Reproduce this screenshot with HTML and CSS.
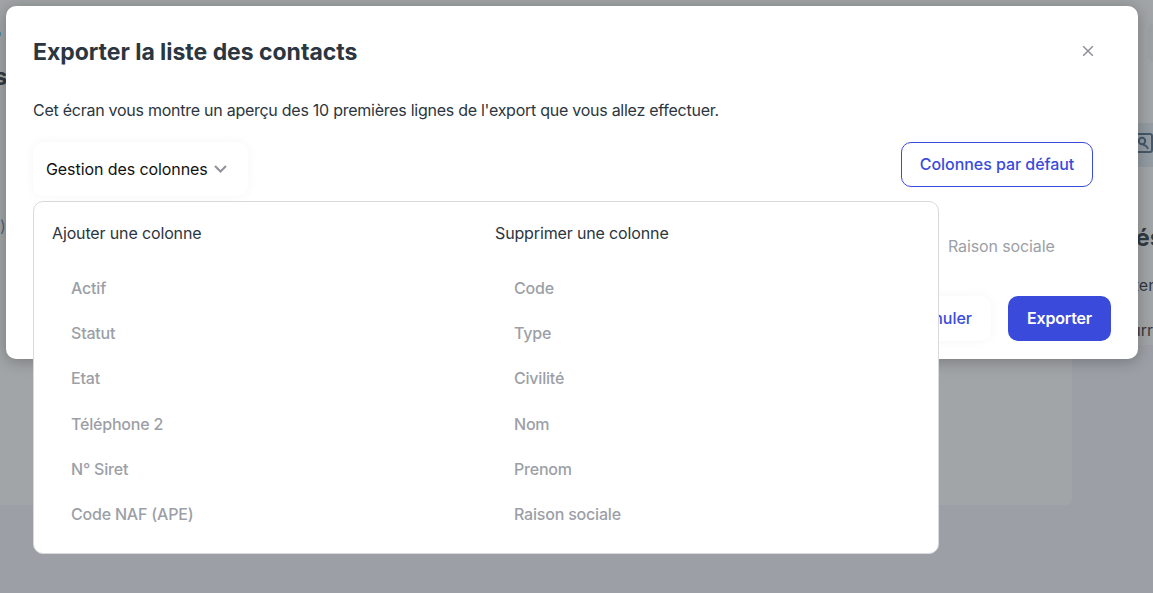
FILE: index.html
```html
<!DOCTYPE html>
<html lang="fr">
<head>
<meta charset="utf-8">
<title>Exporter la liste des contacts</title>
<link rel="stylesheet" href="styles.css">
</head>
<body>
<div class="page">
  <main class="main">
    <span class="crumb">Info</span>
    <span class="page-title">Contacts</span>
    <span class="cell">(actif)</span>
  </main>
  <aside class="aside">
    <div class="aside-card"></div>
    <div class="aside-tool">
      <svg class="search-ico" width="22" height="22" viewBox="0 0 22 22" fill="none" stroke="#4d6f8c" stroke-width="2"><rect x="2" y="2" width="18" height="18" rx="2"/><circle cx="10" cy="9" r="3.2"/><path d="M16 17c-1-3-3-4-5-4"/></svg>
    </div>
    <div class="side-text">
      <strong>Résumé</strong>
      <span class="l1">Contenu</span>
      <span class="l2">Courrier</span>
    </div>
  </aside>
</div>
<div class="overlay"></div>
<div class="modal">
  <header class="modal-head">
    <h1>Exporter la liste des contacts</h1>
    <svg class="close" width="12" height="12" viewBox="0 0 12 12" fill="none" stroke="#8c8a94" stroke-width="1.4"><path d="M1.2 1.2l9.6 9.6M10.8 1.2l-9.6 9.6"/></svg>
  </header>
  <p class="intro">Cet écran vous montre un aperçu des 10 premières lignes de l'export que vous allez effectuer.</p>
  <div class="tools">
    <button class="manage">Gestion des colonnes
      <svg width="13" height="8" viewBox="0 0 13 8" fill="none" stroke="#8f9298" stroke-width="2"><path d="M1 1l5.5 5.5L12 1"/></svg>
    </button>
    <button class="defaults">Colonnes par défaut</button>
  </div>
  <div class="preview"><span>Raison sociale</span></div>
  <footer class="modal-foot">
    <button class="cancel">Annuler</button>
    <button class="export">Exporter</button>
  </footer>
  <div class="dropdown">
    <section>
      <h2>Ajouter une colonne</h2>
      <ul>
        <li>Actif</li><li>Statut</li><li>Etat</li><li>Téléphone 2</li><li>N° Siret</li><li>Code NAF (APE)</li>
      </ul>
    </section>
    <section>
      <h2>Supprimer une colonne</h2>
      <ul>
        <li>Code</li><li>Type</li><li>Civilité</li><li>Nom</li><li>Prenom</li><li>Raison sociale</li>
      </ul>
    </section>
  </div>
</div>
</body>
</html>
```
FILE: styles.css
```css
* { box-sizing: border-box; }
html, body { margin: 0; height: 100%; overflow: hidden; }
body { font-family: Inter, "Noto Sans", sans-serif; background: #f4f6fd; color: #2b3640; position: relative; }
.page { height: 593px; overflow: hidden; display: flex; align-items: flex-start; }
.main { width: 1072px; height: 505px; background: #fff; border-radius: 0 0 6px 0; padding-top: 24px; display: flex; flex-direction: column; align-items: flex-start; }
.crumb { font-size: 14px; line-height: 18px; color: #1b7f9a; margin-left: -24px; }
.page-title { font-size: 24px; font-weight: 700; line-height: 30px; margin: 20px 0 0 -99px; }
.cell { font-size: 16px; line-height: 20px; color: #5d86b0; margin: 124px 0 0 -39px; }
.aside { flex: 1; min-width: 0; height: 345px; background: #fff; position: relative; }
.aside-card { position: absolute; left: 76px; top: 24px; width: 60px; height: 38px; background: #f7f7f7; border-radius: 6px 0 0 6px; }
.aside-tool { position: absolute; left: 50px; right: 0; top: 123px; height: 44px; background: #e2eef5; display: flex; justify-content: flex-end; align-items: center; }
.search-ico { margin-right: -1px; margin-top: -4px; }
.side-text { position: absolute; left: 48px; top: 223px; display: flex; flex-direction: column; align-items: flex-start; white-space: nowrap; }
.side-text strong { font-size: 24px; line-height: 30px; }
.side-text span { font-size: 16px; line-height: 20px; }
.side-text .l1 { margin: 22px 0 0 -17px; }
.side-text .l2 { margin: 25px 0 0 -10px; }
.overlay { position: absolute; inset: 0; background: rgba(57, 64, 68, .47); }
.modal {
  position: absolute; left: 6px; top: 6px; width: 1132px; height: 353px;
  background: #fff; border-radius: 10px; padding: 28px 27px 0 27px;
  box-shadow: 0 2px 16px rgba(0,0,0,.28);
  display: flex; flex-direction: column;
}
.modal-head { display: flex; justify-content: space-between; align-items: center; height: 36px; padding-right: 17px; }
.close { margin-top: -2px; }
h1 { margin: 0; font-size: 23px; font-weight: 700; color: #2b3640; letter-spacing: -.03px; }
.intro { margin: 28px 0 0; font-size: 16px; line-height: 24px; color: #2b3640; letter-spacing: -.26px; }
.tools { display: flex; justify-content: space-between; align-items: flex-start; margin-top: 20px; }
button { font-family: inherit; font-size: 16px; font-weight: 600; border: 0; background: #fff; }
.manage {
  height: 54px; width: 215px; border-radius: 10px; color: #111; font-weight: 400; padding: 0 0 0 13px; letter-spacing: -.08px;
  display: flex; align-items: center; gap: 6px; box-shadow: 0 0 12px rgba(0,0,0,.04);
}
.defaults { width: 192px; height: 45px; border: 1px solid #3a4bdc; border-radius: 10px; color: #3a4bdc; margin-right: 18px; padding: 0 0 2px; font-weight: 500; letter-spacing: -.05px; }
.preview { flex: 1; position: relative; }
.preview span { position: absolute; left: 915px; top: 40px; font-size: 16px; color: #9c9fa6; white-space: nowrap; letter-spacing: -.12px; }
.modal-foot { display: flex; justify-content: flex-end; gap: 17px; height: 45px; margin-bottom: 18px; }
.cancel { width: 110px; border-radius: 10px; color: #3a4bdc; box-shadow: 0 0 12px rgba(0,0,0,.04); text-align: right; padding: 0 19px 2px 0; font-weight: 500; }
.export { width: 103px; border-radius: 10px; background: #3a4bdc; color: #fff; letter-spacing: -.2px; padding: 0 0 2px; }
.dropdown {
  position: absolute; left: 27px; top: 195px; width: 906px; height: 353px;
  background: #fff; border: 1px solid #d8d9dc; border-radius: 10px;
  padding: 20px 18px; display: grid; grid-template-columns: 443px 1fr;
}
h2 { margin: 0; font-size: 16px; font-weight: 400; line-height: 22px; color: #2b3640; letter-spacing: -.14px; }
ul { list-style: none; margin: 21px 0 0; padding: 0 0 0 19px; }
li { font-size: 16px; line-height: 22px; height: 45.2px; padding-top: 12px; font-weight: 500; color: #9c9fa6; letter-spacing: -.2px; }
```
